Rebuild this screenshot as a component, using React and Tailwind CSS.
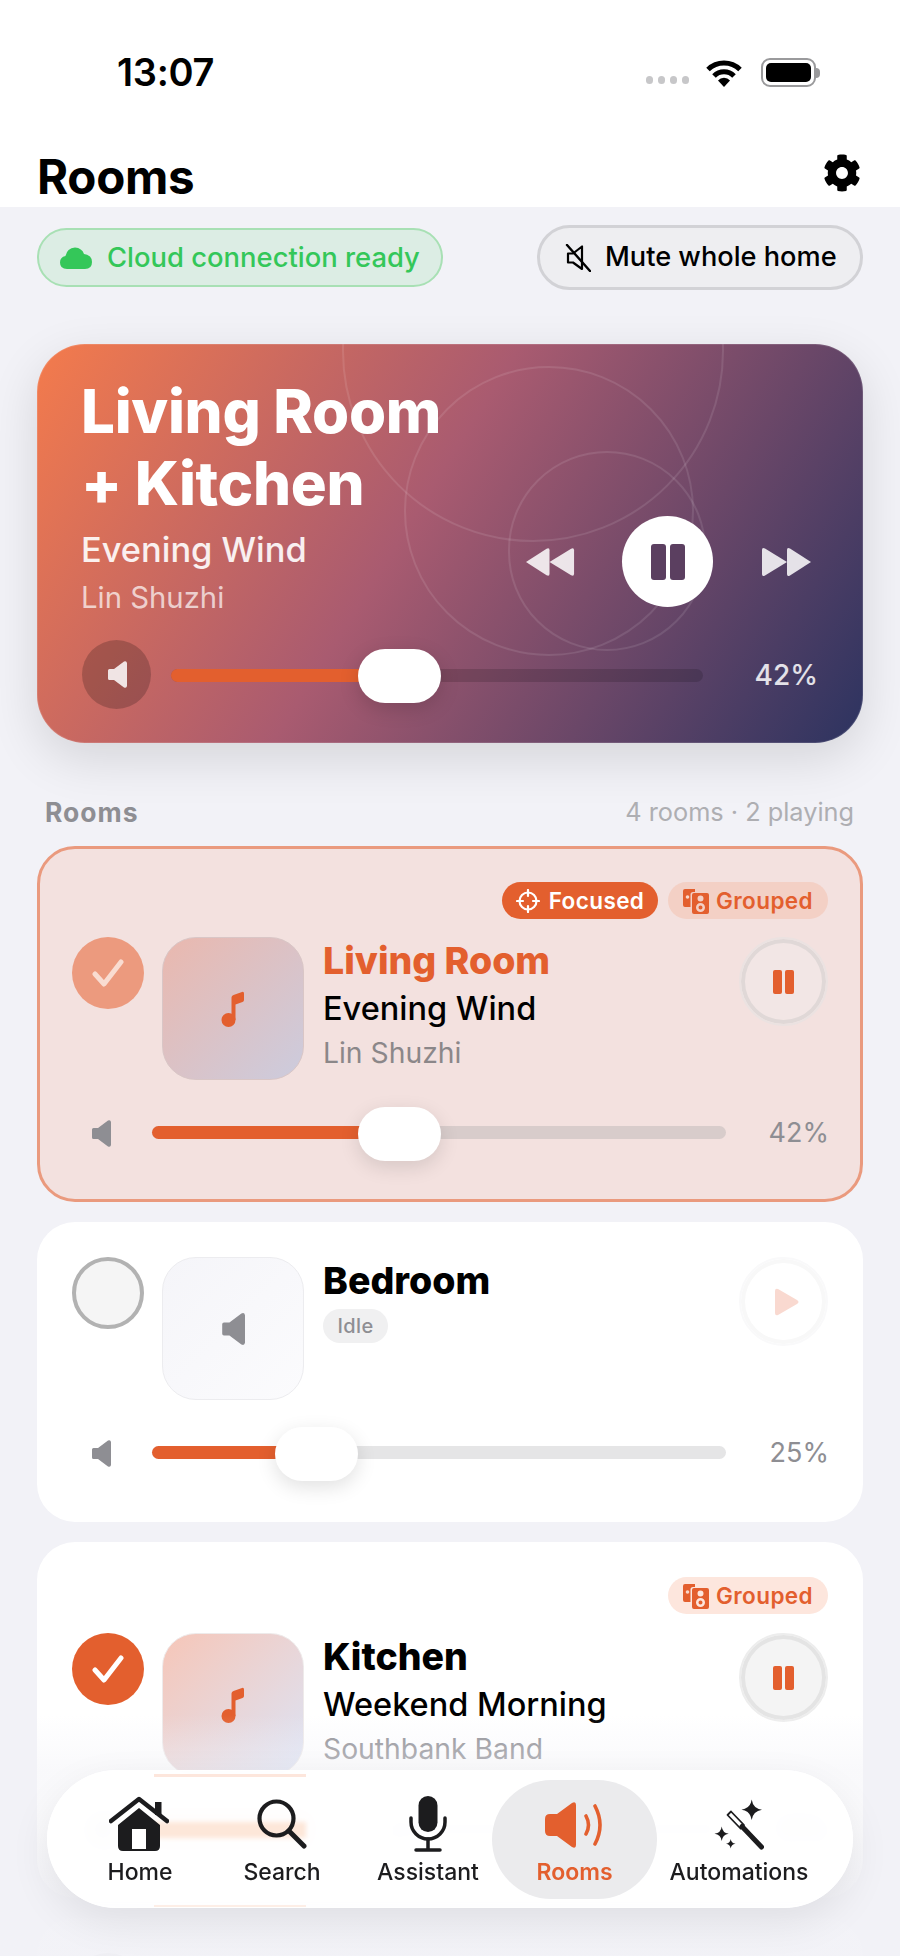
import React from "react";
import { FaCog } from "react-icons/fa";

const Speaker = ({ className, color = "#8e8e93" }) => (
  <svg viewBox="0 0 20 27" className={className} fill={color}>
    <path d="M1 9.500Q1 8 2.500 8H7L17 .6Q19.500 -.6 20 2V25Q19.500 27.600 17 26.400L7 19H2.500Q1 19 1 17.500Z" />
  </svg>
);

const Note = () => (
  <svg viewBox="0 0 24 36" className="w-[24px] h-[36px]" fill="#e35f2e">
    <ellipse cx="7.500" cy="29" rx="7" ry="7" />
    <path d="M10.500 6.500Q10.500 4.500 12.500 4L21 1Q23 .4 23 2.500V9Q23 10.500 21.500 11L14.500 13.500V29H10.500Z" />
  </svg>
);

const PauseBars = () => (
  <span className="flex gap-[3px]">
    <span className="w-[9px] h-[24px] rounded-[2px] bg-[#e35f2e]" />
    <span className="w-[9px] h-[24px] rounded-[2px] bg-[#e35f2e]" />
  </span>
);

const GroupIcon = () => (
  <svg viewBox="0 0 26 26" className="w-[26px] h-[26px]" fill="#e35f2e">
    <path d="M2 1H12V4H10Q7.500 4 7.500 6.500V19H2Q0 19 0 17V3Q0 1 2 1Z" />
    <circle cx="4.500" cy="9" r="1.800" fill="#f8d8cb" />
    <path fillRule="evenodd" d="M11 5H24Q26 5 26 7V24Q26 26 24 26H11Q9 26 9 24V7Q9 5 11 5ZM17.500 7.500A3 3 0 1 0 17.500 13.500A3 3 0 1 0 17.500 7.500ZM17.500 15A4.500 4.500 0 1 0 17.500 24A4.500 4.500 0 1 0 17.500 15ZM17.500 17.500A2 2 0 1 1 17.500 21.500A2 2 0 1 1 17.500 17.500Z" />
  </svg>
);

const Grouped = ({ bg }) => (
  <span className={`h-[37px] w-[160px] rounded-full ${bg} flex items-center justify-center gap-[7px] text-[#e35f2e] text-[22.500px] font-semibold tracking-[0.4px]`}>
    <GroupIcon />
    Grouped
  </span>
);

const Focused = () => (
  <span className="h-[37px] w-[156px] rounded-full bg-[#e35f2e] flex items-center justify-center gap-[9px] text-white text-[22.500px] font-semibold tracking-[0.4px]">
    <svg viewBox="0 0 24 24" className="w-[24px] h-[24px]" fill="none" stroke="#fff" strokeWidth="2.200" strokeLinecap="round">
      <circle cx="12" cy="12" r="8.500" />
      <path d="M12 1V7M12 17V23M1 12H7M17 12H23" />
    </svg>
    Focused
  </span>
);

const Check = ({ bg, stroke }) => (
  <span className={`w-[72px] h-[72px] shrink-0 rounded-full ${bg} flex items-center justify-center`}>
    <svg viewBox="0 0 32 28" className="w-[32px] h-[28px]" fill="none" stroke={stroke} strokeWidth="5" strokeLinecap="round" strokeLinejoin="round">
      <path d="M3 15L12 25L29 3" />
    </svg>
  </span>
);

const Slider = ({ pct, track }) => (
  <div className="flex items-center h-[54px] pl-[19px] mt-[27px]">
    <Speaker className="w-[20px] h-[27px] shrink-0 mt-[-2px]" />
    <div className={`relative flex-1 h-[13px] mt-[-3px] ml-[41px] rounded-full ${track}`}>
      <div className="h-full rounded-l-full bg-[#e35f2e]" style={{ width: `${pct * 4.89 + 10}px` }} />
      <div
        className="absolute top-[-19px] w-[83px] h-[54px] rounded-[27px] bg-white shadow-[0_6px_20px_rgba(0,0,0,0.12)]"
        style={{ left: `${pct * 4.89 + 1}px` }}
      />
    </div>
    <span className="w-[103px] shrink-0 mt-[-1px] mr-[-1px] text-right text-[27px] text-[#8e8e93]">{pct}%</span>
  </div>
);

const Room = ({ children, pct, track = "bg-[#e5e5e6]", className = "bg-white pt-[35px] px-[35px] pb-[41px]" }) => (
  <section className={`rounded-[38px] ${className}`}>
    {children}
    <Slider pct={pct} track={track} />
  </section>
);

const Art = ({ cls, children }) => (
  <div className={`w-[142px] h-[143px] shrink-0 ml-[18px] rounded-[34px] flex items-center justify-center ${cls}`}>{children}</div>
);

const RoundBtn = ({ cls, children }) => (
  <div className={`w-[89px] h-[89px] shrink-0 rounded-full border-[2px] flex items-center justify-center ${cls}`}>{children}</div>
);

const Texts = ({ name, song, artist, nameCls = "text-black", artistCls }) => (
  <div className="flex-1 ml-[19px] min-w-0">
    <div className={`text-[37.500px] leading-[48px] font-extrabold ${nameCls}`}>{name}</div>
    <div className="mt-[2px] text-[32.500px] leading-[44px] font-medium text-black">{song}</div>
    <div className={`mt-[2px] text-[28.300px] leading-[40px] ${artistCls}`}>{artist}</div>
  </div>
);

const Tab = ({ label, cx, active, children }) => (
  <div className={`relative flex flex-col items-center pt-[14px] ${cx} ${active ? "text-[#e35f2e] font-semibold bg-[#ebebed] rounded-[62px]" : "text-[#1c1c1e] font-medium"}`}>
    <div className="h-[58px] flex items-end justify-center">{children}</div>
    <div className="mt-[5px] text-[23px] leading-[30px] whitespace-nowrap">{label}</div>
  </div>
);

export default function App() {
  return (
    <div className="relative w-[900px] h-[1956px] overflow-hidden bg-[#f2f2f7] text-black font-['Inter','Noto_Sans',sans-serif]">
      <header className="bg-white h-[207px] px-[37px] flex flex-col">
        <div className="h-[148px] flex items-start justify-between">
          <span className="mt-[50px] ml-[80px] text-[38px] leading-[44px] font-semibold tracking-[-0.3px]">13:07</span>
          <div className="mt-[57px] mr-[43px] flex items-end h-[30px]">
            <div className="flex gap-[5px] mb-[3px]">
              <i className="block w-[7px] h-[8px] rounded-full bg-[#c7c7c9]" />
              <i className="block w-[7px] h-[8px] rounded-full bg-[#c7c7c9]" />
              <i className="block w-[7px] h-[8px] rounded-full bg-[#c7c7c9]" />
              <i className="block w-[7px] h-[8px] rounded-full bg-[#c7c7c9]" />
            </div>
            <svg viewBox="0 0 36 29" className="w-[36px] h-[29px] ml-[17px]" fill="none" stroke="#000" strokeWidth="5">
              <path d="M2 11.500A23 23 0 0 1 34 11.500" />
              <path d="M8 18A14 14 0 0 1 28 18" />
              <path d="M12 22.500A8 8 0 0 1 24 22.500L18 29Z" fill="#000" stroke="none" />
            </svg>
            <div className="flex items-center ml-[19px]">
              <div className="w-[55px] h-[29px] rounded-[9px] border-[2px] border-[#9a9a9c] p-[3px]">
                <div className="w-full h-full rounded-[5px] bg-black" />
              </div>
              <i className="block w-[4px] h-[10px] rounded-r-full bg-[#9a9a9c]" />
            </div>
          </div>
        </div>
        <div className="flex items-center justify-between h-[50px]">
          <h1 className="mt-[7px] text-[47.500px] leading-[50px] font-bold tracking-[-0.3px]">Rooms</h1>
          <FaCog className="w-[38px] h-[38px] mr-[2px]" />
        </div>
      </header>

      <main className="px-[37px]">
        <div className="pt-[18px] h-[83px] flex items-center justify-between">
          <div className="h-[59px] w-[406px] rounded-full bg-[#dcede4] border-[2px] border-[#a8e0b4] flex items-center pl-[21px] text-[#34c759] text-[27.400px] font-medium">
            <svg viewBox="0 0 32 24" className="w-[32px] h-[24px]" fill="#34c759">
              <path d="M7 23Q0 23 0 16.500Q0 11 5.500 10Q7 2 15 1.500Q22 2 24 8Q32 9 32 16Q32 23 25 23Z" />
            </svg>
            <span className="ml-[15px]">Cloud connection ready</span>
          </div>
          <div className="h-[65px] w-[326px] rounded-full bg-[#eeeef1] border-[3px] border-[#d2d2d6] flex items-center pl-[25px] text-[27.200px] font-medium">
            <svg viewBox="0 0 26 28" className="w-[26px] h-[28px]" fill="none" stroke="#000" strokeWidth="2.200" strokeLinejoin="round" strokeLinecap="round">
              <path d="M3 9.500H8L17 2.500V25L8 18.500H3Z" />
              <path d="M2 1L25 27" strokeWidth="2.400" />
            </svg>
            <span className="ml-[14px]">Mute whole home</span>
          </div>
        </div>

        <section className="relative mt-[54px] h-[399px] rounded-[48px] overflow-hidden shadow-[0_16px_50px_rgba(0,0,0,0.12),inset_0_0_0_1px_rgba(255,255,255,0.12)] bg-[linear-gradient(122deg,#f47b4c_0%,#a95b70_45%,#2c3360_100%)] text-white pl-[44px] pr-[45px] pt-[31px] pb-[34px]">
          <div className="absolute left-[305px] top-[-184px] w-[382px] h-[382px] rounded-full border-2 border-white/10" />
          <div className="absolute left-[367px] top-[22px] w-[290px] h-[290px] rounded-full border-2 border-white/10" />
          <div className="absolute left-[471px] top-[107px] w-[198px] h-[200px] rounded-full border-2 border-white/10" />
          <div className="relative flex justify-between">
            <div>
              <div className="text-[60px] leading-[72px] font-extrabold tracking-[-0.3px]">Living Room<br />+ Kitchen</div>
              <div className="mt-[9px] text-[34.400px] leading-[44px] font-medium text-white/90">Evening Wind</div>
              <div className="mt-[6px] text-[29.300px] leading-[40px] text-white/70">Lin Shuzhi</div>
            </div>
            <div className="self-start mt-[141px] mr-[6px] flex items-center">
              <svg viewBox="0 0 52 30" className="w-[51px] h-[30px]" fill="#fff" fillOpacity="0.85">
                <path d="M1 15L22 1.500Q25 0 25 3V27Q25 30 22 28.500Z" />
                <path d="M25 15L47 1.500Q50 0 50 3V27Q50 30 47 28.500Z" />
              </svg>
              <div className="ml-[46px] w-[91px] h-[91px] rounded-full bg-white flex items-center justify-center gap-[4px]">
                <span className="w-[15px] h-[36px] rounded-[3px] bg-[#5b3f60]" />
                <span className="w-[15px] h-[36px] rounded-[3px] bg-[#5b3f60]" />
              </div>
              <svg viewBox="0 0 52 30" className="ml-[47px] w-[52px] h-[30px]" fill="#fff" fillOpacity="0.85">
                <path d="M51 15L30 1.500Q27 0 27 3V27Q27 30 30 28.500Z" />
                <path d="M27 15L5 1.500Q2 0 2 3V27Q2 30 5 28.500Z" />
              </svg>
            </div>
          </div>
          <div className="relative mt-[22px] flex items-center">
            <div className="w-[69px] h-[69px] shrink-0 ml-[1px] rounded-full bg-black/20 flex items-center justify-center">
              <Speaker className="w-[20px] h-[27px]" color="#f0e4e4" />
            </div>
            <div className="relative flex-1 h-[13px] mt-[2px] ml-[20px] rounded-full bg-black/15">
              <div className="w-[200px] h-full rounded-l-full bg-[#e35f2e]" />
              <div className="absolute left-[187px] top-[-20px] w-[83px] h-[54px] rounded-[27px] bg-white shadow-[0_6px_20px_rgba(0,0,0,0.15)]" />
            </div>
            <span className="w-[115px] shrink-0 text-right text-[28px] font-medium text-white/85">42%</span>
          </div>
        </section>

        <div className="mt-[53px] mb-[18px] pl-[8px] pr-[9px] flex items-center justify-between h-[32px]">
          <span className="text-[26.500px] leading-[32px] font-bold tracking-[1px] text-[#8e8e93]">Rooms</span>
          <span className="text-[25.300px] leading-[32px] text-[#aeaeb2]">4 rooms · 2 playing</span>
        </div>

        <div className="flex flex-col gap-[20px]">
          <Room pct={42} track="bg-[#d8cccb]" className="bg-[#f3e1df] border-[3px] border-[#ea9a7e] pt-[33px] px-[32px] pb-[38px]">
            <div className="flex justify-end gap-[10px] mb-[18px]">
              <Focused />
              <Grouped bg="bg-[#f3d0c5]" />
            </div>
            <div className="flex items-start">
              <Check bg="bg-[#ec9a7e]" stroke="#f9dcd1" />
              <Art cls="border border-[#d9c6c6] bg-[linear-gradient(135deg,#eab8ae,#ccccde)]"><Note /></Art>
              <Texts name="Living Room" song="Evening Wind" artist="Lin Shuzhi" nameCls="text-[#e35f2e]" artistCls="text-[#8b8789]" />
              <RoundBtn cls="border-[#ebe2e1] bg-[#f2e6e5] shadow-[inset_0_0_0_4px_#e0d8d7]"><PauseBars /></RoundBtn>
            </div>
          </Room>

          <Room pct={25}>
            <div className="flex items-start">
              <span className="w-[72px] h-[72px] shrink-0 rounded-full border-[4px] border-[#b2b2b2] bg-[#f5f5f5]" />
              <Art cls="border border-[#ececef] bg-[linear-gradient(135deg,#f5f5f9,#fbfbfd)]"><Speaker className="w-[24px] h-[34px]" /></Art>
              <div className="flex-1 ml-[19px]">
                <div className="text-[37.500px] leading-[48px] font-extrabold">Bedroom</div>
                <div className="mt-[4px] w-[65px] h-[34px] rounded-full bg-[#f0f0f1] flex items-center justify-center text-[20px] font-medium tracking-[0.4px] text-[#8e8e93]">Idle</div>
              </div>
              <RoundBtn cls="border-[#f9f9fa] bg-white shadow-[inset_0_0_0_4px_#f8f8f8]">
                <svg viewBox="0 0 24 28" className="w-[24px] h-[28px] ml-[6px]" fill="#f9d9d0">
                  <path d="M0 3Q0 0 3 1L22 12Q25 14 22 16L3 27Q0 28 0 25Z" />
                </svg>
              </RoundBtn>
            </div>
          </Room>

          <Room pct={31}>
            <div className="flex justify-end mb-[19px]">
              <Grouped bg="bg-[#fde6dd]" />
            </div>
            <div className="flex items-start">
              <Check bg="bg-[#e35f2e]" stroke="#fff" />
              <Art cls="border border-[#eeeaea] bg-[linear-gradient(135deg,#f6c6b8,#dce4f6)]"><Note /></Art>
              <Texts name="Kitchen" song="Weekend Morning" artist="Southbank Band" artistCls="text-[#8e8e93]" />
              <RoundBtn cls="border-[#ededed] bg-[#f4f4f4] shadow-[inset_0_0_0_4px_#e4e4e4]"><PauseBars /></RoundBtn>
            </div>
          </Room>

          <div className="rounded-[38px] bg-white pt-[35px] px-[35px] h-[300px]">
            <span className="block w-[72px] h-[72px] rounded-full border-[4px] border-[#b2b2b2] bg-[#f5f5f5]" />
          </div>
        </div>
      </main>

      <div className="absolute left-0 right-0 top-[1715px] bottom-0 bg-[linear-gradient(180deg,rgba(242,242,247,0)_0px,rgba(242,242,247,0.45)_55px,rgba(242,242,247,0.45)_115px,rgba(242,242,247,0.95)_190px)]" />

      <nav className="absolute left-[47px] top-[1770px] w-[806px] h-[138px] rounded-[69px] bg-white/[0.93] backdrop-blur-[10px] border border-white shadow-[0_14px_40px_rgba(0,0,0,0.08)] flex items-stretch pt-[9px] pb-[8px]">
        <span className="absolute left-[106px] top-[3px] w-[152px] h-[3px] bg-[#fde6dc]" />
        <span className="absolute left-[106px] bottom-0 w-[152px] h-[2px] bg-[#fdeee6]" />
        <span className="absolute left-[100px] top-[51px] w-[158px] h-[16px] bg-[#fde7d9] blur-[2px]" />
        <Tab label="Home" cx="w-[184px]">
          <svg viewBox="0 0 60 56" className="w-[60px] h-[56px] mr-[2px]" fill="#1c1c1e">
            <path d="M2 25L30 3L58 25" fill="none" stroke="#1c1c1e" strokeWidth="4.500" strokeLinecap="round" strokeLinejoin="round" />
            <rect x="46" y="6" width="6.500" height="13" />
            <path fillRule="evenodd" d="M9 29L30 12L51 29V50Q51 55 46 55H14Q9 55 9 50ZM23 33V53H37V33Z" />
          </svg>
        </Tab>
        <Tab label="Search" cx="w-[96px] ml-[2px]">
          <svg viewBox="0 0 50 50" className="w-[50px] h-[50px] mb-[3px]" fill="none" stroke="#1c1c1e" strokeLinecap="round">
            <circle cx="19.500" cy="19.500" r="17" strokeWidth="4.200" />
            <path d="M32 32L47 47" strokeWidth="5" />
          </svg>
        </Tab>
        <Tab label="Assistant" cx="w-[120px] ml-[38px]">
          <svg viewBox="0 0 38 56" className="w-[38px] h-[56px]" fill="none" stroke="#1c1c1e" strokeLinecap="round" strokeWidth="3.500">
            <rect x="9.500" y="0" width="19" height="36" rx="9.500" fill="#1c1c1e" stroke="none" />
            <path d="M2 22V26A17 17 0 0 0 36 26V22" />
            <path d="M19 43V53M7 54H31" />
          </svg>
        </Tab>
        <Tab label="Rooms" cx="w-[165px] ml-[4px]" active>
          <svg viewBox="0 0 60 46" className="w-[60px] h-[46px] mb-[4px]">
            <path d="M5 12H12L27 1Q31 -1 31 3V43Q31 47 27 45L12 34H5Q0 34 0 29V17Q0 12 5 12Z" fill="#e35f2e" />
            <path d="M41 14Q46 23 41 32M50 4Q60 23 50 42" fill="none" stroke="#e35f2e" strokeWidth="3.600" strokeLinecap="round" />
          </svg>
        </Tab>
        <Tab label="Automations" cx="w-[140px] ml-[12px]">
          <svg viewBox="0 0 50 52" className="w-[50px] h-[52px] mb-[2px]" fill="#1c1c1e">
            <path d="M37.700 1.500Q39 10.500 48 11.700Q39 13 37.700 22Q36.500 13 27.500 11.700Q36.500 10.500 37.700 1.500Z" />
            <path d="M7.700 28.500Q8.500 35 14.700 35.700Q8.500 36.500 7.700 43Q7 36.500 .5 35.700Q7 35 7.700 28.500Z" />
            <path d="M16.700 41Q17.200 45.200 21.500 45.700Q17.200 46.200 16.700 50.500Q16.200 46.200 12 45.700Q16.200 45.200 16.700 41Z" />
            <path d="M13.500 17L17 13.500L30 27L26.500 30.500Z" fill="none" stroke="#1c1c1e" strokeWidth="1.800" strokeLinejoin="round" />
            <path d="M28 28.500L47.500 49" fill="none" stroke="#1c1c1e" strokeWidth="5" strokeLinecap="round" />
          </svg>
        </Tab>
      </nav>
    </div>
  );
}
